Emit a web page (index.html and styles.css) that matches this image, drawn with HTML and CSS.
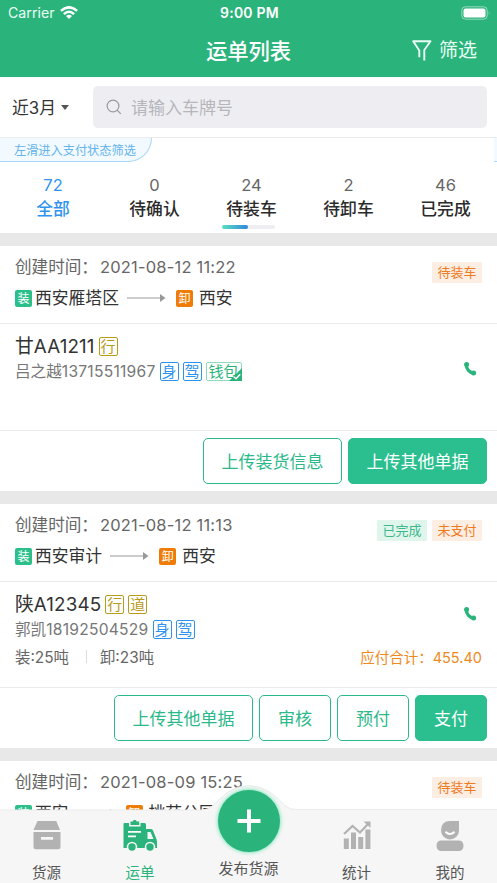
FILE: index.html
```html
<!DOCTYPE html>
<html lang="zh-CN">
<head>
<meta charset="utf-8">
<meta name="viewport" content="width=device-width, initial-scale=1">
<title>运单列表</title>
<link rel="stylesheet" href="styles.css">
</head>
<body>
<svg class="defs" width="0" height="0" aria-hidden="true">
  <symbol id="arrow" viewBox="0 0 40 10"><path d="M1 5h34" stroke="#999" stroke-width="1.1"/><path d="M34 1l5.500 4-5.500 4z" fill="#999"/></symbol>
  <symbol id="phone" viewBox="0 0 14 16"><path d="M3.200 3.500C3.200 8 6.500 11.800 10.800 12.200" fill="none" stroke="#2bb37c" stroke-width="3.200"/><circle cx="3.600" cy="3.500" r="2.500" fill="#2bb37c"/><circle cx="10.600" cy="12" r="2.500" fill="#2bb37c"/></symbol>
</svg>
<div class="app">
  <header class="header">
    <div class="status">
      <div class="carrier">Carrier
        <svg width="18" height="13" viewBox="0 0 18 13" fill="none" stroke="#fff" stroke-width="2.600"><path d="M.9 4.900Q9-2.300 17.100 4.900"/><path d="M3.900 8.100Q9 3.400 14.100 8.100"/><path d="M9 13L6 10Q9 7.600 12 10z" fill="#fff" stroke="none"/></svg>
      </div>
      <div class="clock">9:00 PM</div>
      <svg class="battery" width="30" height="14" viewBox="0 0 30 14"><rect x=".8" y=".8" width="25.400" height="12.400" rx="3.600" fill="none" stroke="#fff" stroke-opacity=".5"/><rect x="2.500" y="2.500" width="22" height="9" rx="2" fill="#fff"/><path d="M27.800 5q1.400 2 0 4z" fill="#fff" fill-opacity=".6"/></svg>
    </div>
    <div class="nav">
      <h1 class="title">运单列表</h1>
      <div class="filter">
        <svg width="20" height="21" viewBox="0 0 20 21" fill="none" stroke="#e9fff5" stroke-width="1.900"><path d="M7.300 17.300V10.500L1.200 1.300h17.300L12.300 10v10.500" stroke-linejoin="round"/></svg>
        <span>筛选</span>
      </div>
    </div>
  </header>

  <div class="search-row">
    <div class="range">近3月<i class="caret"></i></div>
    <div class="search">
      <svg width="16" height="16" viewBox="0 0 16 16" fill="none" stroke="#999" stroke-width="1.200"><circle cx="7" cy="7" r="5.900"/><path d="M11.200 11.200L14.800 14.800"/></svg>
      <span>请输入车牌号</span>
    </div>
  </div>

  <section class="tabs">
    <div class="hints"><div class="hint">左滑进入支付状态筛选</div><div class="hint-next"></div></div>
    <div class="tab-list">
      <div class="tab active"><b>72</b><span>全部</span></div>
      <div class="tab"><b>0</b><span>待确认</span></div>
      <div class="tab"><b>24</b><span>待装车</span></div>
      <div class="tab"><b>2</b><span>待卸车</span></div>
      <div class="tab"><b>46</b><span>已完成</span></div>
    </div>
    <div class="track"><div class="thumb"></div></div>
  </section>

  <article class="card">
    <div class="card-head">
      <div>
        <div class="created">创建时间：<span class="num">2021-08-12 11:22</span></div>
        <div class="route"><i class="load">装</i><span>西安雁塔区</span><svg class="arrow"><use href="#arrow"/></svg><i class="unload">卸</i><span>西安</span></div>
      </div>
      <div class="tags"><span class="tag orange">待装车</span></div>
    </div>
    <div class="card-body">
      <div>
        <div class="plate"><span>甘<span class="num">AA1211</span></span><i class="badge gold">行</i></div>
        <div class="driver"><span>吕之越<span class="num">13715511967</span></span><i class="badge blue">身</i><i class="badge blue">驾</i><i class="badge wallet">钱包<svg width="13" height="13" viewBox="0 0 13 13"><path d="M13 0v13H0z" fill="#2bb37c"/><path d="M4.800 8.700l2.200 2 4.200-4.500" stroke="#fff" stroke-width="1.500" fill="none"/></svg></i></div>
      </div>
      <svg class="phone"><use href="#phone"/></svg>
    </div>
    <div class="actions"><button class="btn wide">上传装货信息</button><button class="btn wide solid">上传其他单据</button></div>
  </article>

  <article class="card">
    <div class="card-head">
      <div>
        <div class="created">创建时间：<span class="num">2021-08-12 11:13</span></div>
        <div class="route"><i class="load">装</i><span>西安审计</span><svg class="arrow"><use href="#arrow"/></svg><i class="unload">卸</i><span>西安</span></div>
      </div>
      <div class="tags"><span class="tag green">已完成</span><span class="tag orange">未支付</span></div>
    </div>
    <div class="card-body weighed">
      <div>
        <div class="plate"><span>陕<span class="num">A12345</span></span><i class="badge gold">行</i><i class="badge gold">道</i></div>
        <div class="driver"><span>郭凯<span class="num">18192504529</span></span><i class="badge blue">身</i><i class="badge blue">驾</i></div>
        <div class="weights"><span>装:25吨</span><i class="bar"></i><span>卸:23吨</span></div>
      </div>
      <div class="body-side">
        <svg class="phone"><use href="#phone"/></svg>
        <div class="total">应付合计：<span class="num">455.40</span></div>
      </div>
    </div>
    <div class="actions"><button class="btn wide">上传其他单据</button><button class="btn">审核</button><button class="btn">预付</button><button class="btn solid">支付</button></div>
  </article>

  <article class="card">
    <div class="card-head">
      <div>
        <div class="created">创建时间：<span class="num">2021-08-09 15:25</span></div>
        <div class="route"><i class="load">装</i><span>西安</span><svg class="arrow"><use href="#arrow"/></svg><i class="unload">卸</i><span>桃苑公园</span></div>
      </div>
      <div class="tags"><span class="tag orange">待装车</span></div>
    </div>
  </article>

  <nav class="tabbar">
    <svg class="tabbar-bg" width="497" height="99" viewBox="0 0 497 99"><path d="M-1 26H200C212 26 214 19 228 8Q249-5 270 8C284 19 286 25.500 296 25.500H498V100H-1z" fill="#f6f6f6" stroke="#ebebeb"/></svg>
    <div class="item">
      <svg width="28" height="30" viewBox="0 0 28 30" fill="#b2b2b2"><path d="M4.500 1h18.800l3.700 9H.5z"/><path fill-rule="evenodd" d="M.5 12H27.500V27a2.200 2.200 0 0 1-2.200 2.200H2.700A2.200 2.200 0 0 1 .5 27zM8 17v2.800h12V17z"/></svg>
      <span>货源</span>
    </div>
    <div class="item current">
      <svg width="34" height="32" viewBox="0 0 34 32"><path fill="#2bb37c" d="M1.500 3H6V6.500H17.500V3H21.500Q23 3 23 4.500V9H28Q29.500 9 30 10.500L33 18Q34 20 34 22V28H.5V4Q.5 3 1.500 3z"/><path fill="#2bb37c" d="M7.500 1.500h2.300a2 2 0 0 1 3.900 0H16.200v3.600H7.500z"/><path d="M5 11.800h13M5 16.300h8" stroke="#fff" stroke-width="1.800"/><path d="M24.500 12h3l3 7h-6z" fill="#f6f6f6"/><g fill="#2bb37c" stroke="#f6f6f6" stroke-width="1.600"><circle cx="9" cy="27" r="4.500"/><circle cx="27" cy="27" r="4.500"/></g></svg>
      <span>运单</span>
    </div>
    <div class="item publish">
      <div class="fab"><svg width="24" height="24" viewBox="0 0 24 24"><path d="M12 .5v23M.5 12h23" stroke="#fff" stroke-width="4"/></svg></div>
      <span>发布货源</span>
    </div>
    <div class="item">
      <svg width="28" height="30" viewBox="0 0 28 30" fill="#b2b2b2"><path d="M.8 18.500h5V29h-5zM8 12.500h5V29H8zM15.200 17h5V29h-5zM22.400 9.500h5V29h-5z"/><path d="M1 14l8.500-8 7.500 6.500L25 4" fill="none" stroke="#b2b2b2" stroke-width="2.200"/><path d="M20.500 1.500H27.500V8z"/></svg>
      <span>统计</span>
    </div>
    <div class="item">
      <svg width="28" height="32" viewBox="0 0 28 32"><path d="M23 1v9.500a9 9 0 0 1-18 0Q5 1 14 1z" fill="#b2b2b2"/><path d="M9.500 11.800q4.500 4.500 9 0" fill="none" stroke="#fff" stroke-width="2"/><rect x=".6" y="20.500" width="26.800" height="10.500" rx="4.500" fill="#b2b2b2"/></svg>
      <span>我的</span>
    </div>
  </nav>
</div>
</body>
</html>
```
FILE: styles.css
```css
* { box-sizing: border-box; }
body { margin: 0; font-family: Inter, "Noto Sans CJK SC", sans-serif; color: #333; background: #e8e8e8; }
i { font-style: normal; }
.defs { position: absolute; }
.app { position: relative; width: 497px; height: 883px; overflow: hidden; }

.header { height: 77px; background: #2bb37c; color: #fff; }
.status { display: grid; grid-template-columns: 1fr auto 1fr; align-items: center; height: 25px; padding: 0 6px 0 8px; }
.carrier { display: flex; align-items: center; gap: 5px; font-size: 14.200px; color: #e9fff5; }
.clock { font-size: 14px; font-weight: 600; letter-spacing: .2px; }
.battery { justify-self: end; }
.nav { display: grid; grid-template-columns: 1fr auto 1fr; grid-template-areas: ". title filter"; align-items: center; height: 51px; padding: 0 20px 0 20px; }
.title { grid-area: title; margin: 0; font-size: 21.300px; font-weight: 500; line-height: 30px; }
.filter { grid-area: filter; justify-self: end; display: flex; align-items: center; gap: 7px; font-size: 19px; line-height: 28px; color: #e9fff5; }

.search-row { display: flex; align-items: center; height: 61px; padding: 0 10px 0 12px; background: #fff; border-bottom: 1px solid #ebebeb; }
.range { display: flex; align-items: center; width: 81px; font-size: 16.800px; }
.caret { margin-left: 5px; border: 4px solid transparent; border-top: 5px solid #555; border-bottom: 0; }
.search { flex: 1; display: flex; align-items: center; gap: 9px; height: 42px; padding-left: 13px; padding-bottom: 1px; border-radius: 5px; background: #eeeef2; color: #b5b5ba; font-size: 17px; }

.tabs { height: 95px; background: #fff; margin-bottom: 13px; }
.hints { display: flex; justify-content: space-between; height: 24px; }
.hint { width: 152px; padding: 1px 0 0 14px; font-size: 12.200px; line-height: 24px; color: #61b4ee; background: #f3faff; border: solid #a9d7f5; border-width: 0 1px 1px 0; border-radius: 0 0 24px 0; }
.hint-next { width: 3px; background: #f3faff; border-bottom: 1px solid #a9d7f5; }
.tab-list { display: grid; grid-template-columns: 106px repeat(4, 97px); margin-top: 12px; }
.tab { display: flex; flex-direction: column; align-items: center; font-size: 16.800px; line-height: 24px; font-weight: 500; color: #2b2b2b; }
.tab b { font-size: 16.500px; line-height: 23px; font-weight: 400; color: #666; }
.tab.active, .tab.active b { color: #2f93ee; }
.track { width: 53px; height: 4px; margin: 4px 0 0 222px; border-radius: 2px; background: #eeeef2; }
.thumb { width: 26px; height: 4px; border-radius: 2px; background: linear-gradient(90deg, #5be0c0, #2f86dc); }

.card { background: #fff; margin-bottom: 13px; }
.card-head { display: flex; justify-content: space-between; height: 78px; padding: 8px 15px 0; border-bottom: 1px solid #ebebeb; }
.created { display: flex; font-size: 16.600px; line-height: 26px; color: #666; }
.created .num { margin-left: 2px; font-size: 16.500px; letter-spacing: .19px; }
.route { display: flex; align-items: center; height: 26px; margin-top: 5px; font-size: 16.800px; line-height: 26px; }
.load, .unload { width: 17px; height: 17px; border-radius: 2px; font-size: 12px; line-height: 17px; text-align: center; color: #fff; background: #2bbf8c; }
.load { margin-right: 3px; }
.unload { margin-right: 6px; background: #f07c08; }
.arrow { width: 40px; height: 10px; margin: 0 10px 0 7px; }
.tags { display: flex; gap: 5px; padding-top: 8px; }
.tag { width: 50px; height: 21px; font-size: 13px; line-height: 21px; text-align: center; border-radius: 1px; }
.tag.orange { color: #ef7a1f; background: #fdeee3; }
.tag.green { color: #3db88c; background: #e0f6ed; }

.card-body { display: flex; justify-content: space-between; height: 107px; padding: 10px 15px 0; border-bottom: 1px solid #ebebeb; }
.card-body.weighed { height: 106px; }
.plate, .driver { display: flex; align-items: center; gap: 4px; height: 25px; line-height: 25px; }
.plate { font-size: 18.800px; }
.plate .num { letter-spacing: .15px; }
.driver { font-size: 15.600px; color: #777; }
.driver .num { letter-spacing: .25px; }
.badge { position: relative; display: block; width: 19px; height: 19px; border: 1px solid; border-radius: 2px; font-size: 15px; line-height: 17px; text-align: center; white-space: nowrap; }
.gold { color: #b89b1a; }
.blue { color: #2f93ee; }
.wallet { width: 36px; color: #2bb37c; border-color: #8fd8ba; }
.wallet svg { position: absolute; right: -1px; bottom: -1px; }
.phone { width: 14px; height: 16px; margin-top: 27px; margin-right: 5px; }
.weights { display: flex; align-items: center; height: 28px; font-size: 15.400px; color: #666; }
.bar { width: 1px; height: 13px; margin: 0 13px 0 17px; background: #ddd; }
.body-side { display: flex; flex-direction: column; align-items: flex-end; }
.body-side .phone { margin-top: 14px; }
.total { display: flex; margin-top: 24px; font-size: 14.500px; line-height: 24px; color: #ee8a1d; }

.actions { display: flex; justify-content: flex-end; gap: 6px; height: 60px; padding: 7px 10px 0; }
.btn { width: 72px; height: 46px; padding: 0 0 2px; border: 1px solid #2bb98a; border-radius: 5px; background: #fff; color: #2bb98a; font: 400 17px Inter, "Noto Sans CJK SC", sans-serif; }
.btn.wide { width: 139px; }
.btn.solid { background: #2bbf8f; border-color: #2bbf8f; color: #fff; }

.tabbar { position: absolute; left: 0; bottom: 0; width: 497px; height: 73px; display: grid; grid-template-columns: 93px 94px 123px 93px 94px; }
.tabbar-bg { position: absolute; left: 0; bottom: 0; }
.item { position: relative; display: flex; flex-direction: column; align-items: center; justify-content: space-between; height: 74px; padding-top: 10px; font-size: 14.500px; line-height: 22px; color: #555; }
.item.current { color: #2bb37c; }
.publish { height: 70px; padding-top: 0; font-size: 15px; }
.fab { display: flex; align-items: center; justify-content: center; width: 62px; height: 62px; margin-top: -20px; border-radius: 50%; background: #2bb37c; box-shadow: 0 0 4px #4fe0a5; }
```
